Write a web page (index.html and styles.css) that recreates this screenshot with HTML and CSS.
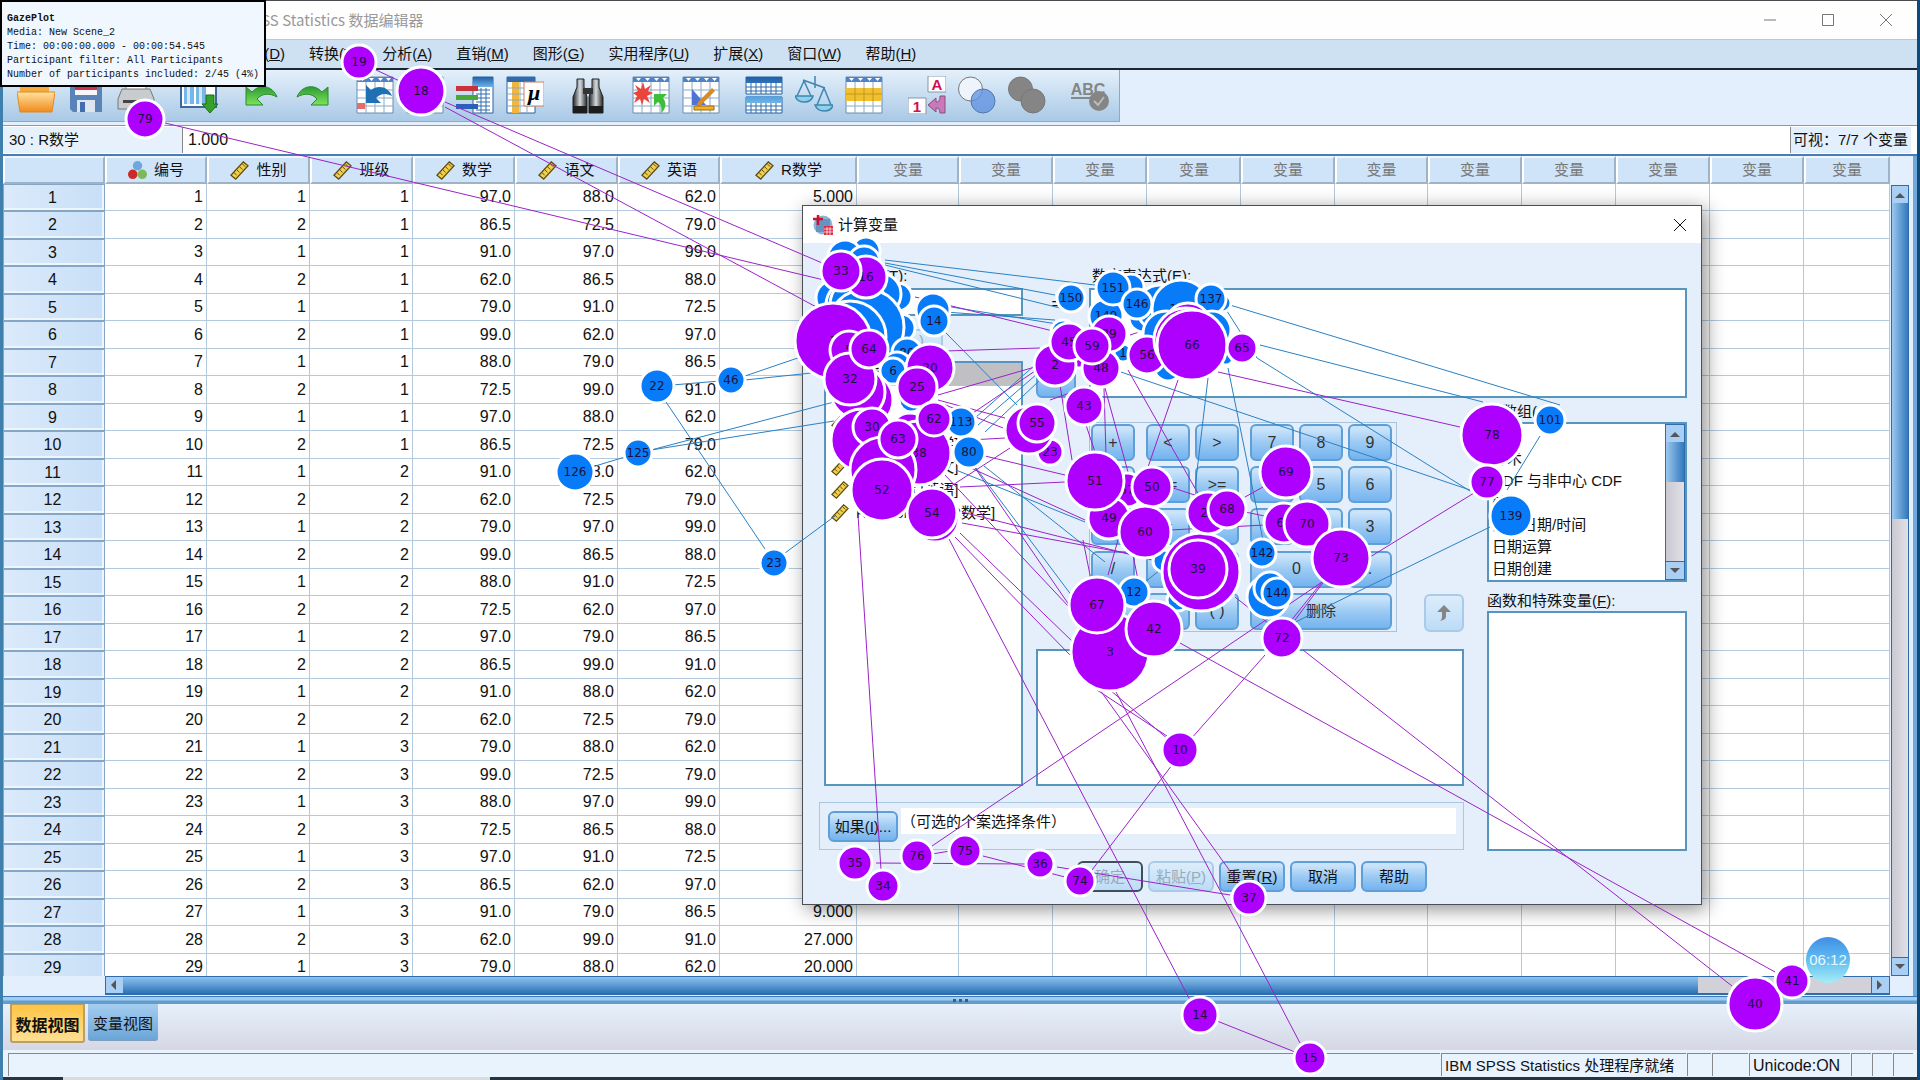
FILE: index.html
```html
<!DOCTYPE html>
<html lang="zh-CN">
<head>
<meta charset="utf-8">
<title>SPSS Statistics 数据编辑器</title>
<link rel="stylesheet" href="styles.css">
</head>
<body>
<svg class="defs" aria-hidden="true">
  <defs>
    <linearGradient id="gBlue" x1="0" y1="0" x2="0" y2="1"><stop offset="0" stop-color="#1f5fa8"/><stop offset="1" stop-color="#6db4e8"/></linearGradient>
    <linearGradient id="gOrange" x1="0" y1="0" x2="0" y2="1"><stop offset="0" stop-color="#ffe2a0"/><stop offset="1" stop-color="#f08a1c"/></linearGradient>
    <linearGradient id="gGreen" x1="0" y1="0" x2="0" y2="1"><stop offset="0" stop-color="#2c9a34"/><stop offset="1" stop-color="#7ee45a"/></linearGradient>
    <linearGradient id="gMetal" x1="0" y1="0" x2="1" y2="0"><stop offset="0" stop-color="#222"/><stop offset=".5" stop-color="#d5dbe0"/><stop offset="1" stop-color="#222"/></linearGradient>
    <symbol id="sheet" viewBox="0 0 38 38"><path fill="#fff" stroke="#6b8cae" d="M1 1h36v36H1z"/><path fill="#4f83c8" d="M1 1h36v5H1z"/><path stroke="#8ba9c8" fill="none" d="M1 14h36M1 22h36M1 30h36M10 6v31M19 6v31M28 6v31"/><path fill="#fff" d="M4 2h5l-2.500 3zM13 2h5l-2.500 3zM22 2h5l-2.500 3zM30 2h5l-2.500 3z"/></symbol>
    <symbol id="ruler" viewBox="0 0 20 20"><path d="M1 15 14 1l5 4L6 19z" fill="#f0cf4a" stroke="#5c4a10" stroke-width="1.300"/><path d="m4 12 3 3M7 9l3 3M10 6l3 3M13 3l3 3" stroke="#5c4a10"/></symbol>
    <symbol id="balls" viewBox="0 0 20 20"><circle cx="10" cy="5" r="5" fill="#6fa8dc"/><circle cx="5" cy="14" r="5" fill="#cc2a2a"/><circle cx="15" cy="14" r="5" fill="#7db85a"/></symbol>
  </defs>
</svg>

<div class="app">
  <header class="titlebar">
    <span class="title">*无标题1 [数据集0] - IBM SPSS Statistics 数据编辑器</span>
    <div class="winctl">
      <button aria-label="最小化"><svg width="14" height="14"><path d="M1 7h12"/></svg></button>
      <button aria-label="最大化"><svg width="14" height="14"><path d="M1.500 1.500h11v11h-11z"/></svg></button>
      <button aria-label="关闭"><svg width="14" height="14"><path d="m1 1 12 12M13 1 1 13"/></svg></button>
    </div>
  </header>
  <nav class="menubar">
    <button>文件(<u>F</u>)</button><button>编辑(<u>E</u>)</button><button>查看(<u>V</u>)</button><button>数据(<u>D</u>)</button><button>转换(<u>T</u>)</button><button>分析(<u>A</u>)</button><button>直销(<u>M</u>)</button><button>图形(<u>G</u>)</button><button>实用程序(<u>U</u>)</button><button>扩展(<u>X</u>)</button><button>窗口(<u>W</u>)</button><button>帮助(<u>H</u>)</button>
  </nav>
  <div class="toolrow">
    <div class="toolbar">
      <div class="tools">
        <button aria-label="打开"><svg viewBox="0 0 38 38"><path d="M3 6h12l3 4h14v24H3z" fill="#f6a93c"/><path d="M0 16h38l-3 20H3z" fill="url(#gOrange)" stroke="#e08a20"/></svg></button>
        <button aria-label="保存"><svg viewBox="0 0 38 38"><path d="M3 2h32v34H6l-3-3z" fill="#5a83b8"/><path d="M8 2h22v17H8z" fill="#f4f6fa"/><path d="M8 11h22v3H8z" fill="#d3304a"/><path d="M10 24h18v12H10z" fill="#dfe5ee"/><path d="M13 26h5v10h-5z" fill="#3f6fae"/></svg></button>
        <button aria-label="打印"><svg viewBox="0 0 38 38"><path d="M9 2h20v12H9z" fill="#fff" stroke="#888"/><path d="M5 13h28l4 10v10H1V23z" fill="#c9cccf" stroke="#777"/><path d="M6 24h26v3H6z" fill="#444"/></svg></button>
      </div>
      <div class="tools">
        <button aria-label="调用最近的对话框"><svg viewBox="0 0 38 38"><path d="M1 1h35v30H1z" fill="#fff" stroke="#3c6a9c" stroke-width="2"/><path d="M4 4h10v24H4zM16 4h10v24H16z" fill="#74b7e8"/><path d="M7 4h3v24H7zM19 4h3v24h-3z" fill="#cfe9fb"/><path d="M26 19h8v9h4l-8 9-8-9h4z" fill="#35a12c" stroke="#1d6d18"/></svg></button>
      </div>
      <div class="tools">
        <button aria-label="撤销"><svg viewBox="0 0 38 38"><path d="M3 11v18h17l-6-6c5-6 13-6 20-2-4-11-17-14-25-5z" fill="url(#gGreen)" stroke="#2b8a30"/></svg></button>
        <button aria-label="重做"><svg viewBox="0 0 38 38"><path d="M35 11v18H18l6-6c-5-6-13-6-20-2 4-11 17-14 25-5z" fill="url(#gGreen)" stroke="#2b8a30"/></svg></button>
      </div>
      <div class="tools">
        <button aria-label="转到个案"><svg viewBox="0 0 38 38"><use href="#sheet"/><path d="M1 27h8v6H1z" fill="#e86a6a"/><path d="M10 9v18h15l-5-5c5-5 10-5 16-2-3-9-14-12-21-6z" fill="#1f6fb5"/></svg></button>
        <button aria-label="转到变量"><svg viewBox="0 0 38 38"><use href="#sheet"/></svg></button>
        <button aria-label="变量"><svg viewBox="0 0 38 38"><path d="M17 1h20v36H17z" fill="#fff" stroke="#2a62a0"/><path d="M17 1h20v10H17z" fill="url(#gBlue)"/><path d="M20 14h14M20 18h14M20 22h14M20 26h14M20 30h14M20 34h14M25 12v25M30 12v25" stroke="#2f6cae"/><path d="M0 10h22v5H0z" fill="#c8323a"/><path d="M0 19h22v5H0z" fill="#4aa838"/><path d="M0 28h22v5H0z" fill="#2c5fb8"/></svg></button>
        <button aria-label="运行描述统计"><svg viewBox="0 0 38 38"><path d="M1 1h28v36H1z" fill="#fff" stroke="#2a62a0"/><path d="M1 1h28v5H1z" fill="#2f6cae"/><path d="M6 6h7v31H6z" fill="#f2b63c"/><path d="M1 12h28M1 18h28M1 24h28M1 30h28M14 6v31M21 6v31" stroke="#8ba9c8"/><path d="M18 6h20v24H18z" fill="#fff" stroke="#d08060"/><text x="28" y="24" class="mu">μ</text></svg></button>
      </div>
      <div class="tools">
        <button aria-label="查找"><svg viewBox="0 0 38 38"><path d="M8 3h7v8l3 10v16H4V21l4-10z" fill="url(#gMetal)" stroke="#222"/><path d="M23 3h7v8l4 10v16H20V21l3-10z" fill="url(#gMetal)" stroke="#222"/><path d="M14 12h10v6H14z" fill="#333"/><path d="M4 30h14v7H4zM20 30h14v7H20z" fill="#1d1d1d"/></svg></button>
      </div>
      <div class="tools">
        <button aria-label="插入个案"><svg viewBox="0 0 38 38"><use href="#sheet"/><path d="m11 6 2 7 6-4-3 6 5 2-6 3 3 7-6-4-2 6-2-6-6 4 3-7-4-3 5-2-3-6 6 4z" fill="#e8453c"/><path d="M22 18h13l-4 4c4 5 3 11-2 15 1-6 0-9-3-11l-4 4z" fill="#3cbf35"/></svg></button>
        <button aria-label="插入变量"><svg viewBox="0 0 38 38"><use href="#sheet"/><path d="M10 13v16h14z" fill="#4f74d8"/><path d="m30 12 3 3-14 14-5 2 2-5z" fill="#d58b2a"/><path d="M12 30h20v4H12z" fill="#f0b030" stroke="#9a6a10"/></svg></button>
      </div>
      <div class="tools">
        <button aria-label="拆分文件"><svg viewBox="0 0 38 38"><path d="M1 1h36v17H1zM1 21h36v16H1z" fill="#fff" stroke="#2a62a0"/><path d="M1 1h36v6H1zM1 20h36v7H1z" fill="url(#gBlue)"/><path d="M1 11h36M1 15h36M1 30h36M1 34h36M6 7v11M11 7v11M16 7v11M21 7v11M26 7v11M31 7v11M6 27v10M11 27v10M16 27v10M21 27v10M26 27v10M31 27v10" stroke="#2f6cae"/></svg></button>
        <button aria-label="加权个案"><svg viewBox="0 0 38 38" fill="none" stroke="#3c86b0" stroke-width="1.500"><path d="M20 0v12M8 4l22 8M9 5 2 20M9 5l7 15M29 12l-7 17M29 12l7 17"/><path d="M0 20h18c-2 8-15 8-18 0zM20 29h18c-2 8-15 8-18 0z" fill="#8fd0ea"/></svg></button>
        <button aria-label="选择个案"><svg viewBox="0 0 38 38"><use href="#sheet"/><path d="M1 12h36v13H1z" fill="#f0c030"/><path d="M1 18h36M10 12v13M19 12v13M28 12v13" stroke="#c8961a"/></svg></button>
      </div>
      <div class="tools">
        <button aria-label="值标签"><svg viewBox="0 0 38 38"><path d="M20 0h18v16H20zM0 22h18v16H0z" fill="#fff" stroke="#8a93a8"/><text x="29" y="14" class="tag">A</text><text x="9" y="36" class="tag">1</text><path d="m20 29 8-7v4c3 0 4-2 4-6h5v17h-5c0-3-1-5-4-5v4z" fill="#c978b8" stroke="#8c4a80"/></svg></button>
        <button aria-label="使用变量集"><svg viewBox="0 0 38 38"><circle cx="12.500" cy="13" r="12" fill="#eef4fb" stroke="#777"/><circle cx="25" cy="25" r="12" fill="#5d8fe0" fill-opacity=".75" stroke="#5577a8"/></svg></button>
        <button aria-label="显示所有变量"><svg viewBox="0 0 38 38" fill="#858585" stroke="#777"><circle cx="12.500" cy="13" r="12"/><circle cx="25" cy="25" r="12"/></svg></button>
      </div>
      <div class="tools">
        <button aria-label="拼写检查"><svg viewBox="0 0 38 38"><text x="17" y="19" class="abc">ABC</text><path d="M0 22h24" stroke="#888" stroke-width="2"/><circle cx="28" cy="25" r="10" fill="#858585"/><path d="m23 25 4 4 6-8" fill="none" stroke="#bbb" stroke-width="2"/></svg></button>
      </div>
    </div>
  </div>
  <div class="editrow">
    <label class="cellname" for="cell">30 : R数学</label>
    <input id="cell" class="cellval" value="1.000">
    <span class="visible">可视：7/7 个变量</span>
  </div>

  <div class="gridwrap">
    <div class="gridarea">
      <table class="grid">
        <colgroup id="cols"></colgroup>
        <thead><tr id="heads"></tr></thead>
        <tbody id="rows"></tbody>
      </table>
    </div>
    <div class="vside">
      <div class="vscroll"><button class="up" aria-label="向上"></button><div class="thumb"></div><div class="track"></div><button class="down" aria-label="向下"></button></div>
    </div>
  </div>
  <div class="hside">
    <div class="hscroll"><button class="left" aria-label="向左"></button><div class="thumb"></div><div class="track"></div><button class="right" aria-label="向右"></button></div>
  </div>
  <div class="splitter"><i></i><i></i><i></i></div>
  <div class="tabs"><button class="tab active">数据视图</button><button class="tab">变量视图</button></div>
  <footer class="status">
    <span class="grow"></span><span class="proc">IBM SPSS Statistics 处理程序就绪</span><span class="s24"></span><span class="s36"></span><span class="uni">Unicode:ON</span><span class="s20"></span><span class="s20"></span><span class="s20"></span>
  </footer>
  <div class="taskedge"></div>
</div>

<section class="dialog" aria-label="计算变量">
  <header class="dtitle">
    <svg width="20" height="20" viewBox="0 0 20 20"><circle cx="10" cy="10" r="9.500" fill="#8db4d6"/><path d="M3 4h14v13H3z" fill="#4c7fb0" opacity=".6"/><path d="M0 4h10M5 0v10" stroke="#cc1030" stroke-width="2.500"/><path d="M11 11h9v9h-9z" fill="#d83048"/><path d="M11 14h9M11 17h9M14 12v8M17 12v8" stroke="#fff" stroke-width=".7"/></svg>
    <span>计算变量</span>
    <button aria-label="关闭"><svg width="14" height="14"><path d="m1 1 12 12M13 1 1 13"/></svg></button>
  </header>
  <div class="dbody">
    <div class="leftcol">
      <label for="target">目标变量(<u>T</u>):</label>
      <input id="target" class="field">
      <button class="btn off typebtn">类型与标签(<u>L</u>)...</button>
      <ul class="box varlist">
        <li class="sel"><svg><use href="#balls"/></svg>编号</li>
        <li><svg><use href="#ruler"/></svg>性别</li>
        <li><svg><use href="#ruler"/></svg>班级</li>
        <li><svg><use href="#ruler"/></svg>数学成绩 [数学]</li>
        <li><svg><use href="#ruler"/></svg>语文成绩 [语文]</li>
        <li><svg><use href="#ruler"/></svg>英语成绩 [英语]</li>
        <li><svg><use href="#ruler"/></svg>Rank of 数学 [R数学]</li>
      </ul>
    </div>
    <div class="eqcol"><span>=</span><button class="btn" aria-label="移入表达式"></button></div>
    <div class="expr"><label for="expr">数字表达式(<u>E</u>):</label><textarea id="expr" class="field"></textarea></div>
    <div class="padrow">
      <div class="keypad">
        <button class="btn">+</button><button class="btn">&lt;</button><button class="btn">&gt;</button><button class="btn">7</button><button class="btn">8</button><button class="btn">9</button>
        <button class="btn">-</button><button class="btn">&lt;=</button><button class="btn">&gt;=</button><button class="btn">4</button><button class="btn">5</button><button class="btn">6</button>
        <button class="btn">*</button><button class="btn">=</button><button class="btn">~=</button><button class="btn">1</button><button class="btn">2</button><button class="btn">3</button>
        <button class="btn">/</button><button class="btn">&amp;</button><button class="btn">|</button><button class="btn two">0</button><button class="btn">.</button>
        <button class="btn">**</button><button class="btn">~</button><button class="btn">( )</button><button class="btn three">删除</button>
      </div>
      <button class="btn off upbtn" aria-label="上移"><svg width="16" height="16"><path d="m8 0 7 7h-5v4c0 3-2 4-6 5 2-2 2-3 2-5V7H1z" fill="#858585"/></svg></button>
    </div>
    <div class="box desc"></div>
    <div class="ifrow"><button class="btn">如果(<u>I</u>)...</button><span>（可选的个案选择条件）</span></div>
    <div class="rightcol">
      <span>函数组(<u>G</u>):</span>
      <div class="box funcs">
        <ul><li>全部</li><li>算术</li><li>CDF 与非中心 CDF</li><li>转换</li><li>当前日期/时间</li><li>日期运算</li><li>日期创建</li></ul>
        <div class="vscroll small"><button class="up" aria-label="向上"></button><div class="thumb"></div><div class="track"></div><button class="down" aria-label="向下"></button></div>
      </div>
      <span>函数和特殊变量(<u>F</u>):</span>
      <div class="box special"></div>
    </div>
  </div>
  <div class="dbuttons"><button class="btn off dark">确定</button><button class="btn off">粘贴(<u>P</u>)</button><button class="btn">重置(<u>R</u>)</button><button class="btn">取消</button><button class="btn">帮助</button></div>
</section>

<div class="clock">06:12</div>
<svg class="gaze" id="gaze" width="1920" height="1080"></svg>
<div class="legend"><b>GazePlot</b><span>Media: New Scene_2</span><span>Time: 00:00:00.000 - 00:00:54.545</span><span>Participant filter: All Participants</span><span>Number of participants included: 2/45 (4%)</span></div>
<script src="app.js"></script>
</body>
</html>
```
FILE: styles.css
```css
* { box-sizing: border-box; }
body { margin: 0; position: relative; overflow: hidden; background: #0f4a7c; font: 15px/20px "Liberation Sans", "Noto Sans CJK SC", sans-serif; color: #111; }
button, input, textarea { font: inherit; color: inherit; margin: 0; padding: 0; border: 0; background: none; border-radius: 0; }
ul { list-style: none; margin: 0; padding: 0; }
.defs { position: absolute; width: 0; height: 0; }

.app { display: flex; flex-direction: column; height: 100vh; margin-right: 3px; border-left: 3px solid #3f7fae; border-top: 1px solid #4a4a50; background: #e3effc; }
.titlebar { height: 38px; flex: none; display: flex; align-items: center; justify-content: space-between; background: #fefefe; }
.title { padding-left: 71px; color: #999; font-family: "Noto Sans CJK SC", sans-serif; }
.winctl { display: flex; gap: 44px; padding-right: 24px; }
.winctl button { width: 14px; height: 14px; }
.winctl svg, .dtitle button svg { display: block; fill: none; stroke: #777; }
.menubar { height: 31px; flex: none; display: flex; align-items: center; gap: 24px; padding-left: 10px; background: #cde1f3; border-top: 1px solid #b9c9d9; border-bottom: 2px solid #1c2630; white-space: nowrap; }
.toolrow { height: 56px; flex: none; background: #e3effc; border-bottom: 1px solid #9098a4; }
.toolbar { display: flex; gap: 13px; width: 1117px; height: 52px; padding-left: 8px; background: linear-gradient(#e4f0fb, #a9c9e6); border: solid #93a7bd; border-width: 0 1px 1px 0; }
.tools { display: flex; align-items: center; }
.tools button { width: 50px; height: 40px; display: flex; justify-content: center; }
.tools svg { width: 38px; height: 38px; }
.mu { font: italic bold 22px "Liberation Serif", serif; text-anchor: middle; }
.tag { font: bold 15px "Liberation Sans", sans-serif; text-anchor: middle; fill: #d01050; }
.abc { font: bold 16px "Liberation Sans", sans-serif; text-anchor: middle; fill: #858585; }
.editrow { height: 30px; flex: none; display: flex; align-items: center; background: #fff; border-bottom: 2px solid #4a7db5; padding-right: 6px; font-size: 16px; }
.cellname { width: 179px; height: 26px; line-height: 26px; padding-left: 6px; font-size: 15px; background: #e6f1fc; }
.cellval { flex: 1; height: 26px; padding-left: 5px; border-left: 1px solid #888; }
.visible { width: 121px; line-height: 26px; padding-left: 2px; font-size: 15px; background: #e3effc; border-left: 1px solid #888; white-space: nowrap; }

.gridwrap { flex: 1; min-height: 0; display: flex; border-right: 4px solid #6fa9dc; }
.gridarea { flex: 1; overflow: hidden; background: #fff; }
.grid { width: 100%; table-layout: fixed; border-collapse: separate; border-spacing: 0; font-size: 16px; }
.grid th { font-weight: 400; }
.grid thead th { height: 28px; padding: 0; background: #cfe3f9; border: 2px solid #9fb3c8; border-left-color: #fff; border-top-color: #eef6fe; font-size: 15px; }
.grid thead th span { display: flex; align-items: center; justify-content: center; gap: 7px; }
.grid thead svg { width: 19px; height: 19px; }
.grid thead .empty { color: #777; }
.grid tbody tr { height: 27px; }
.grid tbody tr:nth-child(even) { height: 28px; }
.grid td { padding: 0 3px 0 0; text-align: right; border: solid #b3cade; border-width: 0 1px 1px 0; }
.grid tbody th { padding: 0 3px 0 0; line-height: 22px; border: 1px solid #86a6c6; border-bottom-color: #86a6c6; background: linear-gradient(90deg, #dbeafb, #c8dff7); box-shadow: inset 0 -2px 0 #edf5fd, inset -2px 0 0 #edf5fd; }

.vside { width: 23px; padding: 29px 4px 0 1px; background: #e3effc; }
.vscroll { height: 100%; display: flex; flex-direction: column; border: 1px solid #2f6cae; }
.vscroll button { height: 17px; background: #a9cff5; }
.vscroll button::before { content: ""; display: block; margin: 0 auto; width: 0; border: 5px solid transparent; }
.vscroll .up::before { border-bottom-color: #555; margin-top: -4px; }
.vscroll .down::before { border-top-color: #555; margin-top: 4px; }
.vscroll .thumb { height: 40%; background: linear-gradient(90deg, #9cc8ee, #3279bd); }
.vscroll .track { flex: 1; background: linear-gradient(90deg, #c9c9d2, #e2e0e6); border-bottom: 1px solid #2f6cae; }
.hside { height: 20px; flex: none; padding: 0 23px 0 102px; border-right: 4px solid #6fa9dc; }
.hscroll { height: 19px; display: flex; border: 1px solid #2f6cae; border-bottom-width: 2px; }
.hscroll button { width: 17px; background: #a9cff5; }
.hscroll button::before { content: ""; display: block; width: 0; border: 5px solid transparent; }
.hscroll .left::before { border-right-color: #555; }
.hscroll .right::before { border-left-color: #555; margin-left: 5px; }
.hscroll .thumb { flex: 91; background: linear-gradient(#8cc3ef, #2f74b8); }
.hscroll .track { flex: 10; background: #d2d1da; border-right: 1px solid #2f6cae; }
.splitter { height: 8px; flex: none; display: flex; justify-content: center; align-items: center; gap: 3px; border-top: 1px solid #3f78b4; background: linear-gradient(#9fcdf2 40%, #639dcc 60%); }
.splitter i { width: 3px; height: 3px; background: #3c5d80; }
.tabs { height: 46px; flex: none; display: flex; align-items: flex-start; gap: 3px; padding-left: 7px; background: linear-gradient(#e6f0fc, #d5d7e4); }
.tab { width: 70px; height: 37px; padding-top: 4px; background: linear-gradient(#a5cdf0, #6aa5d8); border-radius: 0 0 3px 3px; white-space: nowrap; border-bottom: 1px solid #7f9fc0; }
.tab.active { width: 75px; height: 39px; padding-top: 6px; font-weight: 700; font-size: 16px; background: linear-gradient(#ffc543, #ffdf94); border: 2px solid #b9a068; border-top-width: 1px; }
.status { height: 27px; flex: none; display: flex; align-items: stretch; padding: 3px 3px 1px 5px; font-size: 15px; line-height: 24px; background: #e9f3fd; }
.status span { border-left: 1px solid #888; border-top: 1px solid #888; white-space: nowrap; margin-right: 1px; }
.status .grow { flex: 1; }
.status .proc { width: 245px; padding-left: 3px; }
.status .s24 { width: 24px; }
.status .s36 { width: 36px; }
.status .s20 { width: 20px; }
.status .uni { width: 101px; padding-left: 3px; font-size: 16px; }
.taskedge { height: 3px; flex: none; background: linear-gradient(90deg, #263442 60px, #d9dcdf 60px, #d9dcdf 487px, #263442 487px); }

.dialog { position: absolute; left: 802px; top: 205px; width: 900px; height: 700px; border: 1px solid #4a4f55; background: #e4effb; box-shadow: 4px 4px 18px rgba(0,0,0,.45); }
.dtitle { height: 37px; display: flex; align-items: center; gap: 5px; padding: 0 14px 0 10px; background: #fff; }
.dtitle button { width: 14px; height: 14px; margin-left: auto; }
.dtitle button svg { stroke: #111; }
.dbody { display: grid; grid-template-columns: 199px 13px 40px 13px 1fr 23px 200px; grid-template-rows: 134px 234px 154px 65px; padding: 21px 14px 0 21px; }
.box, .field { display: block; background: #fff; border: 2px solid #5795bd; }
.leftcol { grid-column: 1; grid-row: 1 / 4; display: flex; flex-direction: column; }
.leftcol label, .expr label { height: 24px; line-height: 24px; }
.field { width: 100%; height: 28px; resize: none; padding: 0 4px; }
.expr { grid-column: 5 / 8; display: flex; flex-direction: column; }
.expr label { padding-left: 3px; }
.expr .field { flex: 1; }
.btn { border: 2px solid #5d9fd6; border-radius: 6px; background: linear-gradient(#c9e3fa 10%, #9ccaf3 50%, #74b3f0); white-space: nowrap; }
.btn.off { color: #9aaab8; border-color: #a9cbe8; background: linear-gradient(#dcedfb, #bcdcf7); }
.btn.dark { border-color: #3f4f5c; }
.typebtn { width: 119px; height: 24px; line-height: 20px; margin: 13px 0 8px; }
.varlist { flex: 1; white-space: nowrap; overflow: hidden; }
.varlist li { height: 23px; line-height: 23px; display: flex; align-items: center; gap: 7px; padding-left: 5px; }
.varlist .sel { background: #c0c0c4; }
.varlist svg { width: 18px; height: 18px; }
.eqcol { grid-column: 3; display: flex; flex-direction: column; align-items: center; justify-content: space-between; padding-top: 30px; }
.eqcol .btn { width: 40px; height: 38px; }
.padrow { grid-column: 4 / 6; grid-row: 2; display: flex; justify-content: space-between; align-items: flex-end; padding: 24px 0 0 13px; }
.keypad { display: grid; grid-template-columns: 50px 44px 50px 44px 44px 44px; gap: 5px; padding: 1px 5px 1px 1px; border: 1px solid #a9c3dc; width: 308px; height: 210px; }
.keypad .btn { width: 44px; height: 37px; font-size: 16px; color: #333; }
.keypad .btn.two { grid-column: span 2; width: 93px; }
.keypad .btn.three { grid-column: span 3; width: 142px; font-size: 15px; }
.upbtn { width: 40px; height: 38px; display: flex; align-items: center; justify-content: center; }
.desc { grid-column: 3 / 6; grid-row: 3; margin-top: 17px; }
.ifrow { grid-column: 1 / 6; grid-row: 4; display: flex; align-items: flex-start; gap: 3px; height: 48px; margin: 16px 0 0 -5px; padding: 5px 7px 0 8px; border: 1px solid #a9c8e2; }
.ifrow .btn { width: 70px; height: 31px; margin-top: 3px; }
.ifrow span { flex: 1; height: 26px; line-height: 28px; background: #fff; }
.rightcol { grid-column: 7; grid-row: 2 / 5; display: flex; flex-direction: column; padding-top: 4px; white-space: nowrap; }
.funcs { height: 160px; flex: none; display: flex; overflow: hidden; margin-bottom: 9px; }
.funcs ul { flex: 1; padding: 2px 0 0 3px; }
.funcs li { height: 22px; line-height: 22px; }
.funcs .thumb { height: 40px; }
.vscroll.small { width: 20px; }
.special { flex: 1; }
.dbuttons { display: flex; justify-content: center; gap: 5px; padding-top: 10px; }
.dbuttons .btn { width: 66px; height: 31px; }

.clock { position: absolute; left: 1806px; top: 937px; width: 44px; height: 46px; border-radius: 50%; line-height: 46px; text-align: center; color: #e8f8ff; background: linear-gradient(#3f8ee6, #62bdf0 50%, #a5ecf6); }
.gaze { position: absolute; left: 0; top: 0; pointer-events: none; }
.gaze line { stroke-width: 1; }
.gaze .p { stroke: #9b22c8; }
.gaze .b { stroke: #2a80c4; }
.gaze circle { stroke: #fff; stroke-width: 3; }
.gaze .cp { fill: #ad00ff; }
.gaze .cb { fill: #087cf8; }
.gaze text { font: 12px "DejaVu Sans", sans-serif; text-anchor: middle; fill: #1c1240; }
.legend { position: absolute; left: 0; top: 0; width: 266px; height: 87px; padding: 10px 0 0 5px; display: flex; flex-direction: column; border: 2px solid #000; background: #f0f7ff; font: 10px/14px "Liberation Mono", monospace; white-space: nowrap; }
```
FILE: app.js
```js
const widths = [102, 102, 103, 103, 102, 103, 102, 137, 102, 94, 94, 94, 94, 93, 94, 94, 94, 94, 0];
document.getElementById('cols').innerHTML = widths.map(w => w ? `<col style="width:${w}px">` : '<col>').join('');
const vars = ['编号', '性别', '班级', '数学', '语文', '英语', 'R数学'];
document.getElementById('heads').innerHTML = '<th></th>' +
  vars.map((v, i) => `<th><span><svg><use href="#${i ? 'ruler' : 'balls'}"/></svg>${v}</span></th>`).join('') +
  '<th class="empty">变量</th>'.repeat(11);

const scores = `97.0 88.0 62.0|86.5 72.5 79.0|91.0 97.0 99.0|62.0 86.5 88.0|79.0 91.0 72.5|99.0 62.0 97.0|88.0 79.0 86.5|72.5 99.0 91.0|97.0 88.0 62.0|86.5 72.5 79.0|91.0 88.0 62.0|62.0 72.5 79.0|79.0 97.0 99.0|99.0 86.5 88.0|88.0 91.0 72.5|72.5 62.0 97.0|97.0 79.0 86.5|86.5 99.0 91.0|91.0 88.0 62.0|62.0 72.5 79.0|79.0 88.0 62.0|99.0 72.5 79.0|88.0 97.0 99.0|72.5 86.5 88.0|97.0 91.0 72.5|86.5 62.0 97.0|91.0 79.0 86.5|62.0 99.0 91.0|79.0 88.0 62.0`.split('|');
const ranks = { 1: '5.000', 27: '9.000', 28: '27.000', 29: '20.000' };
document.getElementById('rows').innerHTML = scores.map((s, i) => {
  const n = i + 1;
  const cells = [n, n % 2 ? 1 : 2, Math.ceil(n / 10), ...s.split(' '), ranks[n] || ''];
  return `<tr><th>${n}</th>${cells.map(c => `<td>${c}</td>`).join('')}${'<td></td>'.repeat(11)}</tr>`;
}).join('');

/* saccades: x1 y1 x2 y2 */
const purple = `359 62 421 91;445 102 841 271;445 107 833 316;165 123 866 290;915 297 1053 331;945 351 1040 348;938 400 1005 418;938 395 1035 367;938 402 1003 428;970 415 1035 371;970 440 1005 438;945 490 1010 448;960 487 1065 482;985 456 1065 475;962 512 1160 562;962 523 1180 563;960 463 1085 520;858 515 881 870;949 539 1190 1000;955 537 1070 655;960 533 1073 642;945 475 1100 640;973 465 1100 650;1097 690 1170 738;1110 690 1175 745;1115 690 1300 1043;1100 690 1240 885;1180 643 1775 972;1303 650 1732 986;1265 655 1190 740;1172 765 1092 870;932 846 1325 580;1370 557 1474 493;1325 580 1295 620;1322 582 1290 622;1218 372 1460 427;1178 380 1147 470;1128 370 1200 497;1060 385 1072 460;1104 388 1106 455;1105 388 1128 472;1086 425 1096 455;1170 487 1210 500;1245 497 1263 487;1245 512 1284 520;1170 530 1284 524;1235 597 1268 623;1083 540 1095 600;1118 540 1108 575;1133 555 1140 590;876 863 1025 864;932 854 950 851;983 856 1065 877;1057 867 1230 895;1217 1021 1295 1052;1130 335 1170 322;1050 400 1084 388`;
const blue = `672 385 720 381;745 376 833 346;745 380 840 370;666 402 765 549;785 553 835 516;592 467 625 457;651 450 834 402;651 450 834 421;885 260 1095 285;885 263 1055 295;885 265 1060 308;945 306 1057 324;945 312 1055 320;946 333 1017 405;975 418 1035 365;978 425 1037 374;985 432 1040 380;984 466 1105 562;956 470 1085 522;973 464 1075 600;1220 302 1560 405;1225 308 1257 358;1260 345 1483 402;1257 358 1470 491;1109 368 1470 490;1208 378 1195 488;1228 368 1263 540;1540 436 1507 490;1490 527 1275 632;1145 582 1160 570`;
const seg = (list, c) => list.split(';').map(s => { const [a, b, x, y] = s.split(' '); return `<line class="${c}" x1="${a}" y1="${b}" x2="${x}" y2="${y}"/>`; }).join('');

/* fixations: colour x y radius label, in drawing order */
const dots = `p 359 62 17 19;p 421 91 24 18;p 145 119 19 79;b 657 386 17 22;b 731 380 14 46;b 774 563 14 23;b 638 453 14 125;b 575 472 19 126
b 866 251 14;b 845 257 17;b 864 262 16;b 834 298 18;b 898 297 14;b 901 328 14;b 880 294 21;b 850 305 24;b 858 305 28;b 866 327 38;b 850 337 36;b 933 310 17;b 934 321 15 14;b 907 353 15 80;b 897 367 15;b 893 371 13 6;b 911 400 12;b 961 422 15 113;b 969 452 16 80
p 866 277 21 16;p 841 271 20 33;p 833 341 38 1;p 849 350 19 5;p 865 400 28;p 858 392 27;p 850 379 26 32;p 869 349 19 64;p 930 368 24 20;p 917 387 20 25;p 862 440 31;p 910 433 20;p 919 453 32 38;p 872 427 19 30;p 934 419 17 62;p 883 470 33;p 898 439 19 63;p 882 490 31 52;p 935 518 24;p 932 513 25 54
p 1050 452 13 23;p 1029 430 24;p 1037 423 19 55
b 1071 298 14 150;b 1131 287 13;b 1106 316 17 149;b 1143 318 14;b 1113 288 17 151;b 1160 308 23;b 1137 304 15 146;b 1222 303 9;b 1181 309 29 138;b 1211 299 15 137;b 1212 330 19;b 1168 367 14;b 1226 358 7;b 1123 353 9 1;b 1166 334 23;b 1063 332 12
p 1079 350 18;p 1055 365 21 2;p 1101 368 19 48;p 1109 334 18 29;p 1069 342 19 45;p 1092 346 18 59;p 1147 355 19 56;p 1188 326 23;p 1186 340 32;p 1192 345 35 66;p 1242 348 15 65;p 1084 406 19 43
p 1127 490 17 57;p 1109 518 21 49;p 1095 481 29 51;p 1152 487 20 50;b 1164 561 11;b 1134 592 15 12;b 1178 600 11 1;p 1145 532 26 60;p 1201 572 39;p 1198 569 29 39;p 1208 513 21 24;p 1227 509 19 68;p 1286 472 26 69;p 1284 523 20 61;p 1307 524 23 70;p 1341 558 29 73
b 1262 553 14 142;b 1268 597 21;b 1270 588 16;b 1277 593 15 144;p 1110 652 39 3;p 1097 605 28 67;p 1154 629 28 42;p 1282 638 20 72;p 1180 750 18 10
p 855 863 17 35;p 883 886 16 34;p 917 856 16 76;p 965 851 16 75;p 1040 864 14 36;p 1080 881 15 74;p 1249 898 17 37;p 1200 1015 18 14;p 1310 1058 16 15;p 1755 1004 27 40;p 1792 981 17 41
p 1492 435 31 78;p 1487 482 17 77;b 1511 516 21 139;b 1550 420 15 101`;
const marks = dots.split(/[;\n]/).map(s => {
  const [c, x, y, r, t] = s.trim().split(' ');
  return `<circle class="c${c}" cx="${x}" cy="${y}" r="${r}"/>` + (t ? `<text x="${x}" y="${+y + 4}">${t}</text>` : '');
}).join('');
document.getElementById('gaze').innerHTML = seg(blue, 'b') + seg(purple, 'p') + marks;
```
